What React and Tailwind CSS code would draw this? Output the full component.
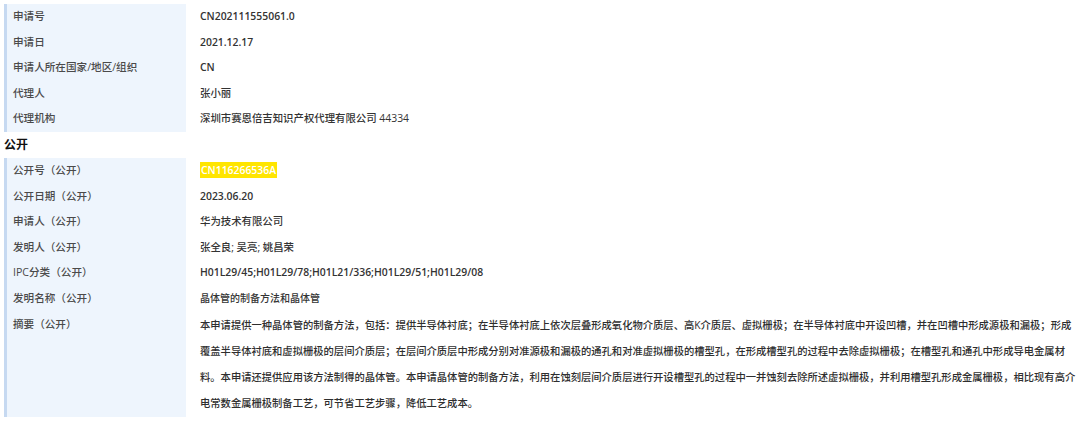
import React from 'react'

const FONT = { fontFamily: '"Open Sans", "Noto Sans CJK SC", sans-serif' }

const applyRows = [
  ['申请号', 'CN202111555061.0', 'font-semibold'],
  ['申请日', '2021.12.17', 'font-semibold'],
  ['申请人所在国家/地区/组织', 'CN', 'font-semibold'],
  ['代理人', '张小丽', 'font-medium'],
  ['代理机构', '深圳市赛恩倍吉知识产权代理有限公司 44334', 'font-medium'],
]

const abstractLines = [
  '本申请提供一种晶体管的制备方法，包括：提供半导体衬底；在半导体衬底上依次层叠形成氧化物介质层、高K介质层、虚拟栅极；在半导体衬底中开设凹槽，并在凹槽中形成源极和漏极；形成',
  '覆盖半导体衬底和虚拟栅极的层间介质层；在层间介质层中形成分别对准源极和漏极的通孔和对准虚拟栅极的槽型孔，在形成槽型孔的过程中去除虚拟栅极；在槽型孔和通孔中形成导电金属材',
  '料。本申请还提供应用该方法制得的晶体管。本申请晶体管的制备方法，利用在蚀刻层间介质层进行开设槽型孔的过程中一并蚀刻去除所述虚拟栅极，并利用槽型孔形成金属栅极，相比现有高介',
  '电常数金属栅极制备工艺，可节省工艺步骤，降低工艺成本。',
]

const Row = ({ label, children }) => (
  <div className='flex'>
    <div className='w-[182px] shrink-0 border-l-[3px] border-[#c6d9f1] bg-[#eef5fd] pl-[6px] text-[10.6px] font-medium text-[#4a4a4a] leading-[25.6px]'>
      {label}
    </div>
    <div className='flex-1 pl-[14px] text-[#333] leading-[25.6px]'>{children}</div>
  </div>
)

export default function App() {
  return (
    <div className='w-[1080px] h-[424px] overflow-hidden bg-white pt-1 pl-1 text-[10.4px]' style={FONT}>
      {applyRows.map(([l, v, w]) => (
        <Row key={l} label={l}>
          <span className={w}>{v}</span>
        </Row>
      ))}
      <div className='h-[26px] leading-[26px] text-[12px] font-bold text-[#111]'>公开</div>
      <Row label='公开号（公开）'>
        <span className='bg-[#ffe500] px-[1px] py-[1px] font-semibold text-white'>CN116266536A</span>
      </Row>
      <Row label='公开日期（公开）'>
        <span className='font-semibold'>2023.06.20</span>
      </Row>
      <Row label='申请人（公开）'>
        <span className='font-medium'>华为技术有限公司</span>
      </Row>
      <Row label='发明人（公开）'>
        <span className='font-medium'>张全良; 吴亮; 姚昌荣</span>
      </Row>
      <Row label='IPC分类（公开）'>
        <span className='font-semibold'>H01L29/45;H01L29/78;H01L21/336;H01L29/51;H01L29/08</span>
      </Row>
      <Row label='发明名称（公开）'>
        <span className='text-[10px] font-medium'>晶体管的制备方法和晶体管</span>
      </Row>
      <Row label='摘要（公开）'>
        <div className='pb-[1px] text-[10.3px] text-[#2e2e2e]'>
          {abstractLines.map((t, i) => (
            <div key={i} className='whitespace-nowrap leading-[26px] font-medium'>{t}</div>
          ))}
        </div>
      </Row>
    </div>
  )
}
